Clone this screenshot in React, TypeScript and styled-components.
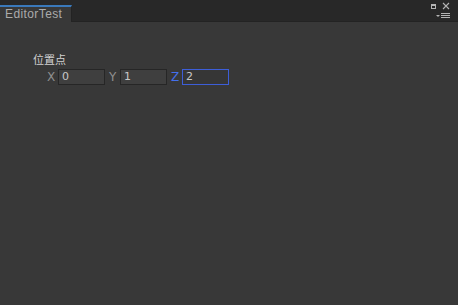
import React from 'react'
import styled, { createGlobalStyle } from 'styled-components'

const GlobalStyle = createGlobalStyle`
  html, body {
    margin: 0;
    padding: 0;
    background: #383838;
    font-family: 'Noto Sans CJK SC', 'DejaVu Sans', sans-serif;
  }
`

const Window = styled.div`
  width: 458px;
  height: 305px;
  display: flex;
  flex-direction: column;
  background: #383838;
  overflow: hidden;
`

const TabBar = styled.div`
  height: 22px;
  display: flex;
  align-items: flex-end;
  justify-content: space-between;
  background: #282828;
  box-shadow: inset 0 -1px 0 #232323;
`

const Tab = styled.div`
  width: 72px;
  height: 17px;
  box-sizing: border-box;
  border-top: 2px solid #3a79bb;
  border-right: 1px solid #232323;
  background: #383838;
  color: #ababab;
  font-family: 'Liberation Sans', sans-serif;
  font-size: 12px;
  letter-spacing: 0.4px;
  line-height: 15px;
  padding-left: 5px;
`

const Controls = styled.div`
  width: 30px;
  height: 22px;
  display: grid;
  grid-template-columns: 12px 12px;
  grid-template-rows: 11px 11px;
`

const Icon = styled.svg`
  display: block;
`

const Content = styled.div`
  flex: 1;
  padding: 30px 0 0 33px;
  color: #c8c8c8;
`

const Heading = styled.div`
  font-size: 11px;
  line-height: 15px;
  color: #d2d2d2;
  margin-bottom: 2px;
`

const Row = styled.div`
  display: flex;
  align-items: center;
  padding-left: 14px;
`

const AxisLabel = styled.span<{ $active?: boolean }>`
  font-family: 'DejaVu Sans', sans-serif;
  font-size: 12px;
  width: 11px;
  color: ${(p) => (p.$active ? '#4470ec' : '#8f8f8f')};
`

const Field = styled.div<{ $active?: boolean }>`
  width: 47px;
  height: 16px;
  box-sizing: border-box;
  margin-right: 4px;
  border: 1px solid ${(p) => (p.$active ? '#3d5ed8' : '#262626')};
  background: ${(p) => (p.$active ? '#363636' : '#3f3f3f')};
  color: #c8c8c8;
  font-family: 'DejaVu Sans', sans-serif;
  font-size: 11px;
  line-height: 14px;
  padding-left: 3px;
`

const axes = [
  { name: 'X', value: '0' },
  { name: 'Y', value: '1' },
  { name: 'Z', value: '2', active: true },
]

export default function App() {
  return (
    <Window>
      <GlobalStyle />
      <TabBar>
        <Tab>EditorTest</Tab>
        <Controls>
          <Icon width="12" height="11" viewBox="0 0 12 11">
            <rect x="3.5" y="4.5" width="4" height="4" fill="none" stroke="#b4b4b4" />
            <rect x="3" y="4" width="5" height="2" fill="#b4b4b4" />
          </Icon>
          <Icon width="12" height="11" viewBox="0 0 12 11">
            <path d="M3 3 L9 9 M9 3 L3 9" stroke="#b4b4b4" strokeWidth="1.1" />
          </Icon>
          <Icon width="12" height="11" viewBox="0 0 12 11">
            <path d="M8 4 L12 4 L10 6 Z" fill="#b4b4b4" />
          </Icon>
          <Icon width="12" height="11" viewBox="0 0 12 11">
            <path d="M1 2.5 H10 M1 4.5 H10 M1 6.5 H10" stroke="#b4b4b4" strokeWidth="1" />
          </Icon>
        </Controls>
      </TabBar>
      <Content>
        <Heading>位置点</Heading>
        <Row>
          {axes.map((a) => (
            <React.Fragment key={a.name}>
              <AxisLabel $active={a.active}>{a.name}</AxisLabel>
              <Field $active={a.active}>{a.value}</Field>
            </React.Fragment>
          ))}
        </Row>
      </Content>
    </Window>
  )
}
